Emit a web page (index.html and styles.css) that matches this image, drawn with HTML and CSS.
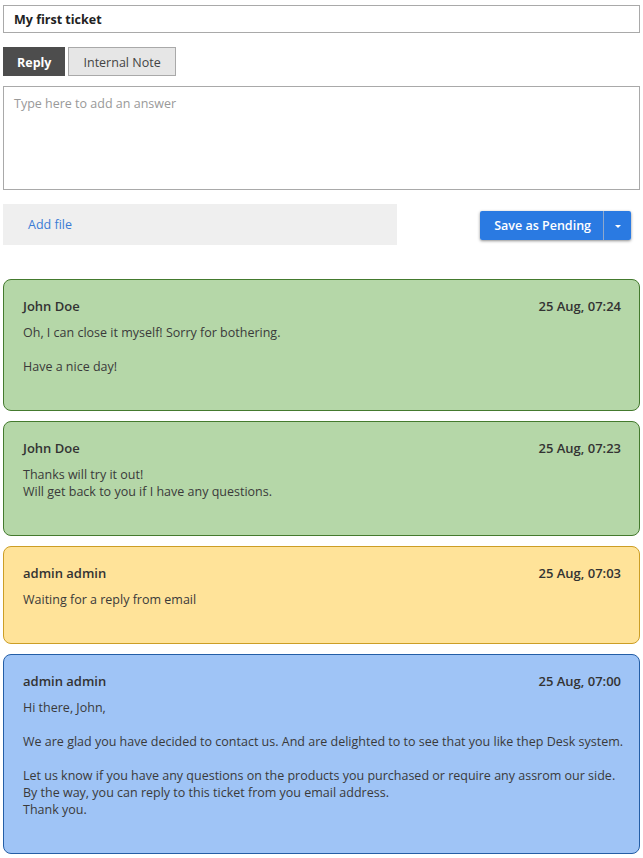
FILE: index.html
```html
<!DOCTYPE html>
<html lang="en">
<head>
    <meta charset="UTF-8">
    <title>My first ticket</title>
    <link rel="stylesheet" href="styles.css">
</head>
<body>
    <div class="ticket-title">My first ticket</div>

    <div class="tabs">
        <button class="tab active">Reply</button>
        <button class="tab">Internal Note</button>
    </div>

    <div class="answer">Type here to add an answer</div>

    <div class="actions">
        <div class="attach"><a href="#">Add file</a></div>
        <div class="save-group">
            <button class="save">Save as Pending</button>
            <button class="save-caret"><span class="caret"></span></button>
        </div>
    </div>

    <div class="thread">
        <div class="message customer">
            <div class="message-head">
                <span class="author">John Doe</span>
                <span class="date">25 Aug, 07:24</span>
            </div>
            <p>Oh, I can close it myself! Sorry for bothering.</p>
            <p>Have a nice day!</p>
        </div>

        <div class="message customer">
            <div class="message-head">
                <span class="author">John Doe</span>
                <span class="date">25 Aug, 07:23</span>
            </div>
            <p>Thanks will try it out!<br>Will get back to you if I have any questions.</p>
        </div>

        <div class="message note">
            <div class="message-head">
                <span class="author">admin admin</span>
                <span class="date">25 Aug, 07:03</span>
            </div>
            <p>Waiting for a reply from email</p>
        </div>

        <div class="message staff">
            <div class="message-head">
                <span class="author">admin admin</span>
                <span class="date">25 Aug, 07:00</span>
            </div>
            <p>Hi there, John,</p>
            <p>We are glad you have decided to contact us. And are delighted to to see that you like thep Desk system.</p>
            <p>Let us know if you have any questions on the products you purchased or require any assrom our side.<br>By the way, you can reply to this ticket from you email address.<br>Thank you.</p>
        </div>
    </div>
</body>
</html>
```

FILE: styles.css
```css
/* Ticket reply view */
:root {
    --text: #333;
    --border: #a9a9a9;
    --blue: #2a7ae2;
}

* {
    margin: 0;
    padding: 0;
    box-sizing: border-box;
}

body {
    font-family: 'Open Sans', 'Liberation Sans', sans-serif;
    font-size: 12.5px;
    color: var(--text);
    background: #fff;
    padding: 5px 3px 0;
}

.ticket-title {
    height: 28px;
    border: 1px solid var(--border);
    padding: 1px 10px 0;
    line-height: 26px;
    font-size: 12.5px;
    font-weight: bold;
    color: #222;
}

.tabs {
    display: flex;
    gap: 3px;
    margin-top: 14px;
}

.tab {
    font-family: inherit;
    font-size: 12.5px;
    height: 29px;
    padding: 1px 13px 0;
    border: 1px solid var(--border);
    background: #e6e6e6;
    color: #444;
}

.tab.active {
    background: #4d4d4d;
    border-color: #4d4d4d;
    color: #fff;
    font-weight: bold;
}

.tab + .tab {
    padding: 1px 14px 0;
}

.answer {
    margin-top: 10px;
    height: 104px;
    border: 1px solid var(--border);
    padding: 8px 10px;
    color: #999;
}

.actions {
    display: flex;
    align-items: center;
    justify-content: space-between;
    margin-top: 14px;
    padding-right: 9px;
}

.attach {
    width: 394px;
    height: 41px;
    background: #efefef;
    padding-left: 25px;
    line-height: 41px;
}

.attach a {
    color: #3a7bd5;
    text-decoration: none;
}

.save-group {
    display: flex;
    margin-top: 2px;
    box-shadow: 0 1px 3px rgba(0, 0, 0, 0.45);
    border-radius: 2px;
}

.save, .save-caret {
    font-family: inherit;
    font-size: 12.5px;
    font-weight: 600;
    height: 29px;
    border: none;
    background: var(--blue);
    color: #fff;
}

.save {
    padding: 0 12px 0 14px;
    border-right: 1px solid #8ea8cc;
    border-radius: 2px 0 0 2px;
}

.save-caret {
    width: 27px;
    border-radius: 0 2px 2px 0;
}

.caret {
    display: inline-block;
    border-left: 3px solid transparent;
    border-right: 3px solid transparent;
    border-top: 3px solid #fff;
    vertical-align: middle;
}

.thread {
    display: flex;
    flex-direction: column;
    gap: 10px;
    margin-top: 34px;
}

.message {
    border: 1px solid;
    border-radius: 8px;
    padding: 16px 8px 18px 19px;
    line-height: 17px;
    color: #3a3a3a;
}

.message p {
    margin-bottom: 17px;
}

.message-head {
    display: flex;
    justify-content: space-between;
    line-height: 20px;
    margin: 0 10px 8px 0;
    font-size: 13px;
    font-weight: 600;
    color: #333;
}

.customer {
    background: #b5d7a8;
    border-color: #447a2e;
}

.note {
    background: #ffe399;
    border-color: #cc9e25;
}

.staff {
    background: #9fc4f6;
    border-color: #245ea6;
}
```
